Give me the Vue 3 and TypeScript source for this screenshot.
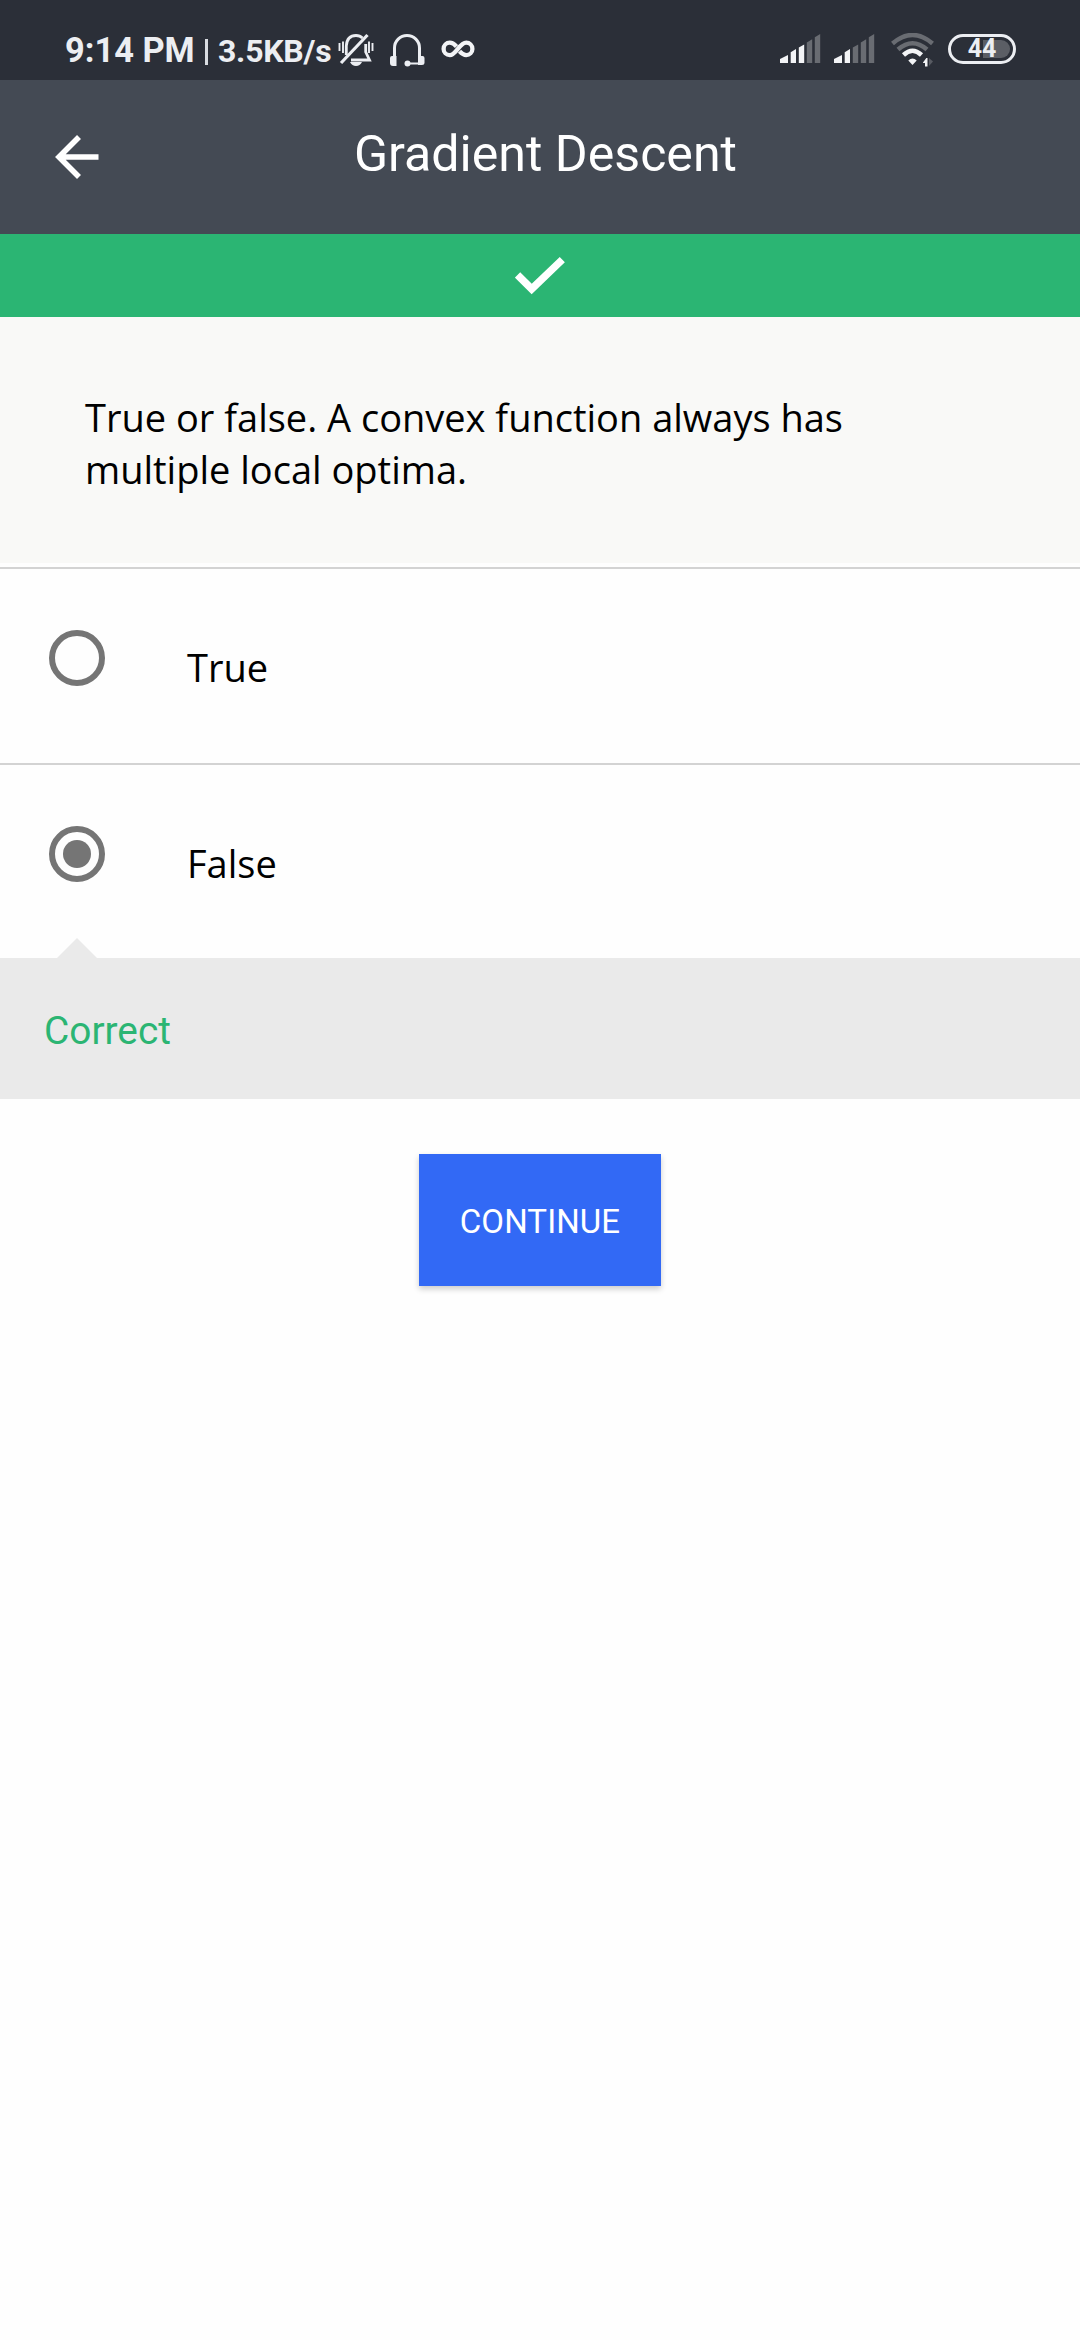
<script setup lang="ts">
import { ref } from 'vue'

interface Option {
  id: string
  label: string
}

const title = 'Gradient Descent'
const question = ['True or false. A convex function always has', 'multiple local optima.']
const options: Option[] = [
  { id: 'true', label: 'True' },
  { id: 'false', label: 'False' },
]
const selected = ref('false')
const signals = [3, 2]
const bars = [
  'M0 29V25L8 21V29Z',
  'M10.7 29V18.3L16 15V29Z',
  'M18.800 29V13.500L24.200 10.500V29Z',
  'M26.800 29V8.500L32.200 5.300V29Z',
  'M34.800 29V3.300L40.200 0V29Z',
]
</script>

<template>
  <main class="screen">
    <div class="status">
      <span class="clock">9:14 PM</span>
      <span class="divider"></span>
      <span class="speed">3.5KB/s</span>
      <svg class="bell" width="36" height="34" viewBox="0 0 36 34" fill="none" stroke="#eceef2">
        <path d="M8.300 22V13Q9 2.500 18 2.500Q22 2.500 24.500 5M27.700 11V19L31.500 27H13" stroke-width="2.800" />
        <path d="M3 30L29.500 2" stroke-width="3.200" />
        <path d="M1.500 10V18M5 8.500V20M31 8.500V20M34.500 10V18" stroke-width="1.900" />
        <path d="M12 29H24Q22 33 18 33Q14 33 12 29Z" fill="#eceef2" stroke="none" />
      </svg>
      <svg class="headset" width="36" height="33" viewBox="0 0 36 33" fill="none" stroke="#eceef2">
        <path d="M5.500 24V14A12.500 12.500 0 0 1 30.500 14V24" stroke-width="3" />
        <path d="M18 29.500H31V27" stroke-width="2" />
        <path d="M1 24Q1 22 3 22H7.500V32H4Q1 32 1 29ZM35.500 24Q35.500 22 33.500 22H29V31H33Q35.500 31 35.500 29Z" fill="#eceef2" stroke="none" />
        <circle cx="18.500" cy="29.500" r="3" fill="#eceef2" stroke="none" />
      </svg>
      <svg class="infinity" width="34" height="18" viewBox="0 0 34 18" fill="none" stroke="#f3f4f6" stroke-width="4.300">
        <path d="M15.500 6.500C13 3.800 11 2.700 8.800 2.700A6.200 6.200 0 0 0 8.800 15.100C15 15.100 18.500 2.700 25.200 2.700A6.200 6.200 0 0 1 25.200 15.100C23 15.100 21 14 18.500 11.300" />
      </svg>
      <span class="spacer"></span>
      <svg v-for="(level, i) in signals" :key="i" class="signal" width="41" height="29" viewBox="0 0 41 29">
        <path v-for="(bar, n) in bars" :key="n" :d="bar" :fill="n < level ? '#f3f4f6' : '#696c72'" />
      </svg>
      <svg class="wifi" width="46" height="34" viewBox="0 0 46 34" fill="none">
        <path d="M2.500 10.500Q22.500 -6.500 42.500 10.500" stroke="#696c72" stroke-width="4.500" />
        <path d="M8 16.500Q22.500 4 37 16.500" stroke="#696c72" stroke-width="4.500" />
        <path d="M13.500 22Q22.500 13.500 31.500 22" stroke="#f3f4f6" stroke-width="4.500" />
        <path d="M18.300 27.500Q22.500 23.500 26.700 27.500L22.500 32Z" fill="#f3f4f6" />
        <path d="M33 29.500L36.300 25H37.500V33.500H35V30H33Z" fill="#f3f4f6" />
        <path d="M39 25V33L43 28.500Z" fill="#585b62" />
      </svg>
      <span class="battery">44</span>
    </div>

    <header class="bar">
      <svg class="back" width="44" height="44" viewBox="0 0 44 44" fill="none" stroke="#fff" stroke-width="5.600">
        <path d="M24 2L4 22L24 42M4 22H43.500" />
      </svg>
      <h1>{{ title }}</h1>
    </header>

    <div class="result">
      <svg width="50" height="38" viewBox="0 0 50 38" fill="none" stroke="#fff" stroke-width="7.400">
        <path d="M2.600 18L16.700 32L47.300 2.700" />
      </svg>
    </div>

    <section class="question">
      <p v-for="line in question" :key="line">{{ line }}</p>
    </section>

    <label v-for="option in options" :key="option.id" class="option" @click="selected = option.id">
      <span class="radio"><span v-if="selected === option.id" class="dot"></span></span>
      <span>{{ option.label }}</span>
    </label>

    <div class="feedback"><span>Correct</span></div>

    <button class="continue" type="button"><span>CONTINUE</span></button>
  </main>
</template>

<style>
body {
  margin: 0;
  background: #fefefe;
}
</style>

<style scoped>
.screen {
  width: 1080px;
  height: 2340px;
  overflow: hidden;
  background: #fefefe;
  font-family: Roboto, sans-serif;
}
.status {
  box-sizing: border-box;
  height: 80px;
  padding: 0 64px 0 65px;
  display: flex;
  align-items: flex-start;
  background: #2b2f38;
  color: #eceef2;
  font-weight: 700;
  white-space: nowrap;
}
.status svg {
  flex: none;
}
.clock {
  width: 140px;
  font-size: 34.4px;
  line-height: 101px;
}
.divider {
  width: 3px;
  height: 26px;
  margin-top: 39px;
  background: #d9dce1;
}
.speed {
  width: 120px;
  margin-left: 10px;
  font-size: 32px;
  letter-spacing: -0.25px;
  line-height: 103px;
}
.bell {
  margin: 33px 0 0 0;
}
.headset {
  margin: 34px 0 0 15px;
}
.infinity {
  margin: 40px 0 0 16px;
}
.spacer {
  flex: 1;
}
.signal {
  margin: 34px 13px 0 0;
}
.wifi {
  margin: 33px 12px 0 2px;
}
.battery {
  box-sizing: border-box;
  width: 68px;
  height: 30px;
  margin-top: 34px;
  padding: 3px;
  border: 3px solid #eceef2;
  border-radius: 15px;
  background: linear-gradient(90deg, transparent 29px, #5b5e65 29px) content-box;
  font-size: 25px;
  line-height: 18px;
  text-align: center;
}
.bar {
  height: 154px;
  display: flex;
  align-items: flex-start;
  background: #444a54;
}
.back {
  margin: 55px 0 0 55px;
}
h1 {
  margin: 0 0 0 255px;
  color: #fff;
  font-size: 50.1px;
  font-weight: 400;
  line-height: 148px;
  white-space: nowrap;
}
.result {
  height: 83px;
  display: flex;
  justify-content: center;
  background: #2bb573;
}
.result svg {
  margin-top: 23px;
}
.question {
  box-sizing: border-box;
  height: 250px;
  padding: 74px 85px 0;
  background: #f9f9f7;
  border-bottom: 4px solid #fefefe;
}
.question p,
.option {
  margin: 0;
  color: #000;
  font-family: "Open Sans", sans-serif;
  font-size: 38px;
  line-height: 52px;
  white-space: nowrap;
}
.option {
  box-sizing: border-box;
  height: 196px;
  padding: 72px 0 0 49px;
  display: flex;
  align-items: flex-start;
  border-top: 2px solid #d3d3d3;
}
.option + .feedback {
  margin-top: -1px;
}
.radio {
  box-sizing: border-box;
  width: 56px;
  height: 56px;
  margin: -11px 82px 0 0;
  display: flex;
  align-items: center;
  justify-content: center;
  border: 6px solid #757575;
  border-radius: 50%;
}
.dot {
  width: 28px;
  height: 28px;
  border-radius: 50%;
  background: #757575;
}
.feedback {
  position: relative;
  box-sizing: border-box;
  height: 141px;
  padding: 46px 0 0 44px;
  background: #eaeaea;
  color: #2bb573;
  font-size: 38.8px;
  line-height: 53px;
}
.feedback::before {
  content: "";
  position: absolute;
  left: 57px;
  top: -20px;
  width: 40px;
  height: 20px;
  background: #eaeaea;
  clip-path: polygon(50% 0, 100% 100%, 0 100%);
}
.continue {
  display: flex;
  align-items: flex-start;
  justify-content: center;
  width: 242px;
  height: 132px;
  margin: 55px auto 0;
  padding: 2px 0 0;
  border: 0;
  background: #3269f5;
  box-shadow: 0 3px 6px rgba(0, 0, 0, 0.2);
  color: #fff;
  font-family: Roboto, sans-serif;
  font-size: 33px;
  letter-spacing: 0.1px;
  line-height: 131px;
}
</style>
